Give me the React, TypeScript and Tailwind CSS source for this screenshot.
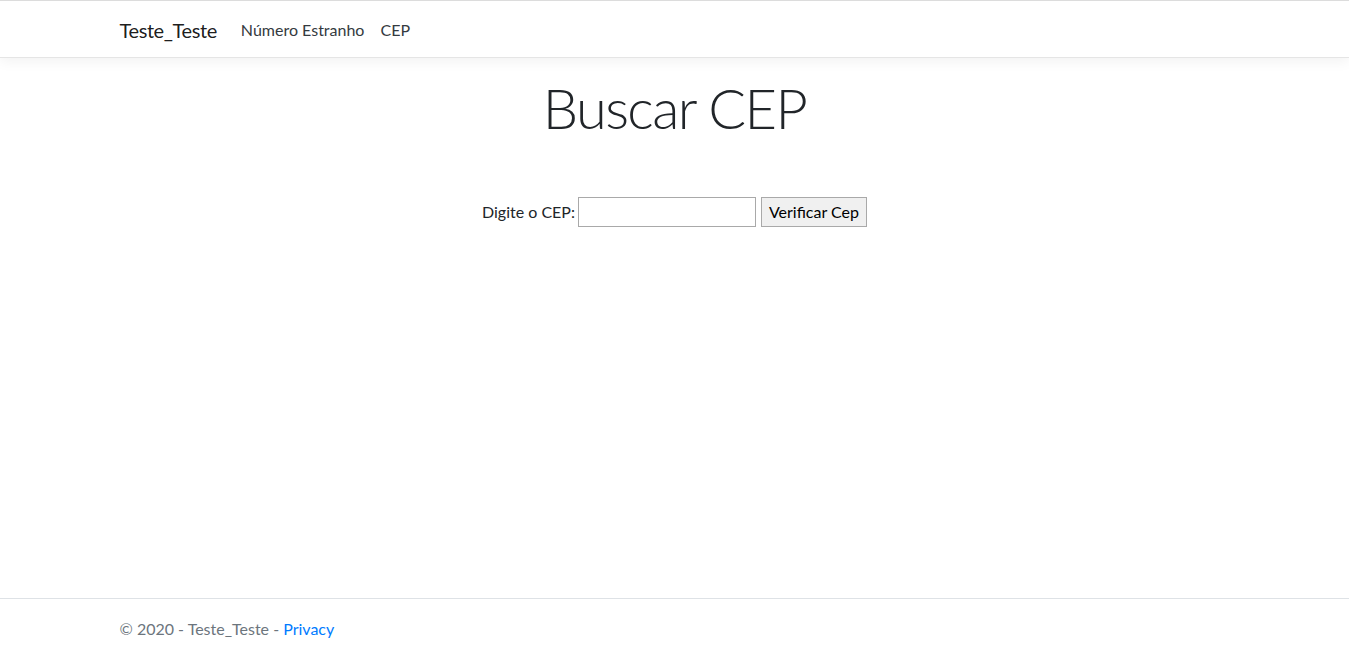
export default function App() {
  return (
    <div className="flex min-h-screen flex-col bg-white font-['Lato',sans-serif] text-[#212529]">
      {/* navbar */}
      <header className="border-t border-t-[#dcdcdc] border-b border-b-[#e5e5e5] bg-white shadow-[0_0.25rem_0.75rem_rgba(0,0,0,0.05)]">
        <nav className="mx-auto flex h-[56px] w-[1140px] items-center px-[15px]">
          <a className="mr-4 pt-[1px] text-[20px] leading-[30px] tracking-[-0.4px] text-black/90">Teste_Teste</a>
          <ul className="flex pt-[1px]">
            <li>
              <a className="block px-2 text-[16px] leading-6 text-[#343a40]">Número Estranho</a>
            </li>
            <li>
              <a className="block px-2 text-[16px] leading-6 text-[#343a40]">CEP</a>
            </li>
          </ul>
        </nav>
      </header>

      {/* conteúdo */}
      <main className="mx-auto mt-4 w-[1140px] px-[15px] pb-4">
        <div className="text-center">
          <h1 className="mb-2 text-[56px] font-light leading-[1.2] tracking-[-1.6px]">Buscar CEP</h1>
          <form className="mt-[56px] flex items-center justify-center text-[16px]">
            <label className="mr-[3px]">Digite o CEP:</label>
            <input type="text" className="h-[30px] w-[178px] border border-[#a9a9a9] px-1 outline-none" />
            <button
              type="button"
              className="ml-[5px] h-[30px] border border-[#a9a9a9] bg-[#f0f0f0] px-[7px] text-[16px] text-black"
            >
              Verificar Cep
            </button>
          </form>
        </div>
      </main>

      {/* rodapé */}
      <footer className="mt-auto h-[60px] border-t border-[#dee2e6] leading-[60px] text-[#6c757d]">
        <div className="mx-auto w-[1140px] px-[15px] text-[16px]">
          © 2020 - Teste_Teste - <a className="text-[#007bff]">Privacy</a>
        </div>
      </footer>
    </div>
  )
}
